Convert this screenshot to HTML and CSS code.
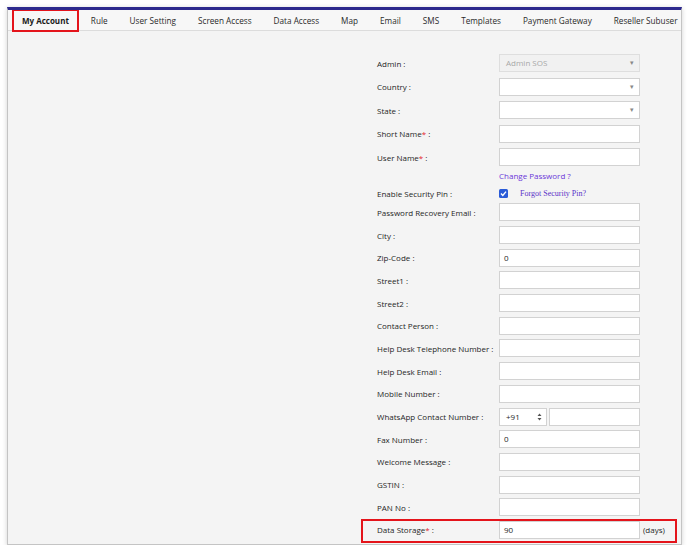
FILE: index.html
```html
<!DOCTYPE html>
<html>
<head>
<meta charset="utf-8">
<link rel="stylesheet" href="styles.css">
</head>
<body>
<div class="panel">
  <ul class="tabs">
    <li class="tab active">My Account</li>
    <li class="tab">Rule</li>
    <li class="tab">User Setting</li>
    <li class="tab">Screen Access</li>
    <li class="tab">Data Access</li>
    <li class="tab">Map</li>
    <li class="tab">Email</li>
    <li class="tab">SMS</li>
    <li class="tab">Templates</li>
    <li class="tab">Payment Gateway</li>
    <li class="tab">Reseller Subuser</li>
  </ul>
  <div class="form">
    <div class="row tall"><label>Admin :</label><div class="field select disabled">Admin SOS<span class="caret">▾</span></div></div>
    <div class="row tall"><label>Country :</label><div class="field select"><span class="caret">▾</span></div></div>
    <div class="row tall"><label>State :</label><div class="field select"><span class="caret">▾</span></div></div>
    <div class="row tall"><label>Short Name<span class="req">*</span> :</label><div class="field"></div></div>
    <div class="row tall"><label>User Name<span class="req">*</span> :</label><div class="field"></div></div>
    <div class="row link-row"><label></label><a class="link">Change Password ?</a></div>
    <div class="row pin-row"><label>Enable Security Pin :</label><span class="check"><svg width="9" height="9" viewBox="0 0 9 9"><rect width="9" height="9" rx="1.5" fill="#2a5bd7"/><path d="M2 4.6 L3.8 6.4 L7 2.6" stroke="#fff" stroke-width="1.4" fill="none"/></svg></span><a class="forgot">Forgot Security Pin?</a></div>
    <div class="row"><label>Password Recovery Email :</label><div class="field"></div></div>
    <div class="row"><label>City :</label><div class="field"></div></div>
    <div class="row"><label>Zip-Code :</label><div class="field">0</div></div>
    <div class="row"><label>Street1 :</label><div class="field"></div></div>
    <div class="row"><label>Street2 :</label><div class="field"></div></div>
    <div class="row"><label>Contact Person :</label><div class="field"></div></div>
    <div class="row"><label>Help Desk Telephone Number :</label><div class="field"></div></div>
    <div class="row"><label>Help Desk Email :</label><div class="field"></div></div>
    <div class="row"><label>Mobile Number :</label><div class="field"></div></div>
    <div class="row"><label>WhatsApp Contact Number :</label><div class="phone"><div class="field code">+91<svg class="spin" width="5" height="8" viewBox="0 0 5 8"><path d="M0.5 3 L2.5 0.5 L4.5 3 Z M0.5 5 L2.5 7.5 L4.5 5 Z" fill="#555"/></svg></div><div class="field num"></div></div></div>
    <div class="row"><label>Fax Number :</label><div class="field">0</div></div>
    <div class="row"><label>Welcome Message :</label><div class="field"></div></div>
    <div class="row"><label>GSTIN :</label><div class="field"></div></div>
    <div class="row"><label>PAN No :</label><div class="field"></div></div>
    <div class="row highlight"><label>Data Storage<span class="req">*</span> :</label><div class="field">90</div><span class="unit">(days)</span></div>
  </div>
</div>
</body>
</html>
```

FILE: styles.css
```css
* { box-sizing: border-box; }
html, body { margin: 0; padding: 0; background: #fff; }
body {
  font-family: "Open Sans", "Noto Sans", sans-serif;
  color: #262626;
  font-size: 8px;
}
.panel {
  margin: 7px 0 0 7px;
  width: 675px;
  height: 538px;
  background: #f4f4f4;
  border-top: 3px solid #2e2a8e;
  border-left: 1px solid #c4c4c4;
  border-right: 1px solid #c4c4c4;
  border-bottom: 1px solid #c4c4c4;
  box-shadow: 0 1px 5px rgba(0,0,0,0.18);
  overflow: hidden;
}
.tabs {
  list-style: none;
  margin: 0;
  padding: 0 0 0 3px;
  display: flex;
  height: 21px;
  background: #f7f7f7;
  border-bottom: 1px solid #dcdcdc;
  white-space: nowrap;
}
.tab {
  padding: 0 11px;
  line-height: 21px;
  font-size: 8.2px;
  color: #2a2a2a;
  flex: none;
}
.tab.active {
  font-weight: bold;
  font-size: 8px;
  position: relative;
  color: #1a1a1a;
}
.tab.active::after {
  content: "";
  position: absolute;
  left: 1px;
  right: 1px;
  top: -1px;
  bottom: -2px;
  border: 2px solid #e4141b;
}
.form {
  padding: 20.5px 0 0 369px;
}
.row {
  display: flex;
  align-items: center;
  height: 22.7px;
  position: relative;
}
.row.tall { height: 23.5px; }
.row.link-row { height: 13px; }
.row.pin-row { height: 19px; padding-top: 3px; }
.row label {
  width: 122px;
  flex: none;
  white-space: nowrap;
}
.req { color: #e3222b; }
.field {
  width: 141px;
  height: 18px;
  background: #fff;
  border: 1px solid #d2d2d2;
  padding: 0 4px;
  line-height: 16px;
  font-size: 8px;
  color: #262626;
  position: relative;
  flex: none;
}
.select .caret {
  position: absolute;
  right: 5px;
  top: 0;
  font-size: 7px;
  color: #888;
}
.field.disabled {
  background: #f1f1f1;
  color: #a8a8a8;
  padding-left: 6px;
  border-color: #dedede;
}
.link {
  color: #6a36d9;
  font-size: 8px;
}
.check {
  width: 9px;
  height: 9px;
  display: flex;
  flex: none;
}
.forgot {
  margin-left: 12px;
  font-family: "Liberation Serif", "Times New Roman", serif;
  font-size: 8px;
  color: #5a32c8;
}
.phone {
  display: flex;
  gap: 2px;
  width: 141px;
}
.field.code {
  width: 48px;
  display: flex;
  align-items: center;
  justify-content: space-between;
  padding: 0 4px 0 6px;
}
.field.num { width: 91px; }
.unit {
  margin-left: 3px;
  font-size: 8px;
}
.highlight::after {
  content: "";
  position: absolute;
  left: -16px;
  width: 312px;
  top: 0;
  bottom: -2px;
  border: 2px solid #e4141b;
}
```
